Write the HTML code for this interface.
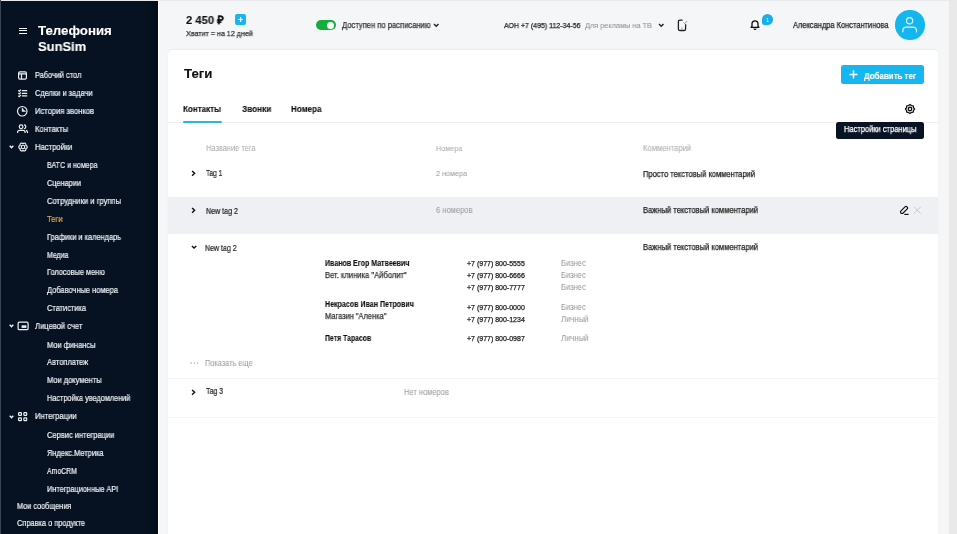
<!DOCTYPE html>
<html><head><meta charset="utf-8"><style>
html,body{margin:0;padding:0;width:957px;height:534px;overflow:hidden;background:#f5f6f8;}
body{position:relative;font-family:"Liberation Sans", sans-serif;}
.t{position:absolute;white-space:nowrap;line-height:1;transform-origin:0 50%;will-change:transform;}
.r{position:absolute;}
</style></head><body>
<div class="r" style="left:0px;top:0px;width:957px;height:534px;background:#f5f6f8;"></div>
<div class="r" style="left:0px;top:0px;width:957px;height:1px;background:#e8e9eb;"></div>
<div class="r" style="left:0px;top:1px;width:158px;height:533px;background:#061222;"></div>
<div class="r" style="left:144px;top:1px;width:14px;height:533px;background:linear-gradient(90deg,#061222,#030d1b);"></div>
<div class="r" style="left:0px;top:0px;width:1px;height:534px;background:#3b4553;"></div>
<div class="r" style="left:158px;top:0px;width:1px;height:534px;background:#ffffff;"></div>
<div class="r" style="left:949px;top:0px;width:8px;height:534px;background:#e9e9e9;"></div>
<div class="r" style="left:168px;top:49.8px;width:770px;height:490px;background:#ffffff;border-radius:4px;box-shadow:0 -0.5px 1.5px rgba(0,0,0,0.05);"></div>
<div class="r" style="left:19px;top:27.5px;width:8.3px;height:1.3px;background:#eef1f5;"></div>
<div class="r" style="left:19px;top:30px;width:8.3px;height:1.3px;background:#eef1f5;"></div>
<div class="r" style="left:19px;top:32.5px;width:8.3px;height:1.3px;background:#eef1f5;"></div>
<div class="t" style="left:37.5px;top:24px;font-size:13.25px;font-weight:700;color:#ffffff;-webkit-text-stroke:0.12px #ffffff;">Телефония</div>
<div class="t" style="left:37.5px;top:40px;font-size:13.25px;font-weight:700;color:#ffffff;transform:scaleX(0.979);-webkit-text-stroke:0.12px #ffffff;">SunSim</div>
<div class="t" style="left:34.5px;top:72px;font-size:8.25px;font-weight:400;color:#eef1f5;transform:scaleX(0.894);-webkit-text-stroke:0.2px #eef1f5;">Рабочий стол</div>
<div class="t" style="left:34.5px;top:90px;font-size:8.25px;font-weight:400;color:#eef1f5;transform:scaleX(0.901);-webkit-text-stroke:0.2px #eef1f5;">Сделки и задачи</div>
<div class="t" style="left:34.5px;top:108px;font-size:8.25px;font-weight:400;color:#eef1f5;transform:scaleX(0.919);-webkit-text-stroke:0.2px #eef1f5;">История звонков</div>
<div class="t" style="left:34.5px;top:126px;font-size:8.25px;font-weight:400;color:#eef1f5;transform:scaleX(0.926);-webkit-text-stroke:0.2px #eef1f5;">Контакты</div>
<div class="t" style="left:34.5px;top:144px;font-size:8.25px;font-weight:400;color:#eef1f5;transform:scaleX(0.927);-webkit-text-stroke:0.2px #eef1f5;">Настройки</div>
<div class="t" style="left:46.5px;top:162px;font-size:8.25px;font-weight:400;color:#eef1f5;transform:scaleX(0.858);-webkit-text-stroke:0.2px #eef1f5;">ВАТС и номера</div>
<div class="t" style="left:46.5px;top:180px;font-size:8.25px;font-weight:400;color:#eef1f5;transform:scaleX(0.891);-webkit-text-stroke:0.2px #eef1f5;">Сценарии</div>
<div class="t" style="left:46.5px;top:198px;font-size:8.25px;font-weight:400;color:#eef1f5;transform:scaleX(0.921);-webkit-text-stroke:0.2px #eef1f5;">Сотрудники и группы</div>
<div class="t" style="left:46.5px;top:216px;font-size:8.25px;font-weight:400;color:#e0a558;transform:scaleX(0.923);-webkit-text-stroke:0.2px #e0a558;">Теги</div>
<div class="t" style="left:46.5px;top:234px;font-size:8.25px;font-weight:400;color:#eef1f5;transform:scaleX(0.896);-webkit-text-stroke:0.2px #eef1f5;">Графики и календарь</div>
<div class="t" style="left:46.5px;top:252px;font-size:8.25px;font-weight:400;color:#eef1f5;transform:scaleX(0.847);-webkit-text-stroke:0.2px #eef1f5;">Медиа</div>
<div class="t" style="left:46.5px;top:269px;font-size:8.25px;font-weight:400;color:#eef1f5;transform:scaleX(0.890);-webkit-text-stroke:0.2px #eef1f5;">Голосовые меню</div>
<div class="t" style="left:46.5px;top:287px;font-size:8.25px;font-weight:400;color:#eef1f5;transform:scaleX(0.906);-webkit-text-stroke:0.2px #eef1f5;">Добавочные номера</div>
<div class="t" style="left:46.5px;top:305px;font-size:8.25px;font-weight:400;color:#eef1f5;transform:scaleX(0.900);-webkit-text-stroke:0.2px #eef1f5;">Статистика</div>
<div class="t" style="left:34.5px;top:323px;font-size:8.25px;font-weight:400;color:#eef1f5;transform:scaleX(0.921);-webkit-text-stroke:0.2px #eef1f5;">Лицевой счет</div>
<div class="t" style="left:46.5px;top:342px;font-size:8.25px;font-weight:400;color:#eef1f5;transform:scaleX(0.903);-webkit-text-stroke:0.2px #eef1f5;">Мои финансы</div>
<div class="t" style="left:46.5px;top:359px;font-size:8.25px;font-weight:400;color:#eef1f5;transform:scaleX(0.908);-webkit-text-stroke:0.2px #eef1f5;">Автоплатеж</div>
<div class="t" style="left:46.5px;top:377px;font-size:8.25px;font-weight:400;color:#eef1f5;transform:scaleX(0.908);-webkit-text-stroke:0.2px #eef1f5;">Мои документы</div>
<div class="t" style="left:46.5px;top:395px;font-size:8.25px;font-weight:400;color:#eef1f5;transform:scaleX(0.887);-webkit-text-stroke:0.2px #eef1f5;">Настройка уведомлений</div>
<div class="t" style="left:34.5px;top:413px;font-size:8.25px;font-weight:400;color:#eef1f5;transform:scaleX(0.927);-webkit-text-stroke:0.2px #eef1f5;">Интеграции</div>
<div class="t" style="left:46.5px;top:432px;font-size:8.25px;font-weight:400;color:#eef1f5;transform:scaleX(0.908);-webkit-text-stroke:0.2px #eef1f5;">Сервис интеграции</div>
<div class="t" style="left:46.5px;top:450px;font-size:8.25px;font-weight:400;color:#eef1f5;transform:scaleX(0.903);-webkit-text-stroke:0.2px #eef1f5;">Яндекс.Метрика</div>
<div class="t" style="left:46.5px;top:468px;font-size:8.25px;font-weight:400;color:#eef1f5;transform:scaleX(0.833);-webkit-text-stroke:0.2px #eef1f5;">AmoCRM</div>
<div class="t" style="left:46.5px;top:486px;font-size:8.25px;font-weight:400;color:#eef1f5;transform:scaleX(0.890);-webkit-text-stroke:0.2px #eef1f5;">Интеграционные API</div>
<div class="t" style="left:17px;top:503px;font-size:8.25px;font-weight:400;color:#eef1f5;transform:scaleX(0.883);-webkit-text-stroke:0.2px #eef1f5;">Мои сообщения</div>
<div class="t" style="left:17px;top:520px;font-size:8.25px;font-weight:400;color:#eef1f5;transform:scaleX(0.896);-webkit-text-stroke:0.2px #eef1f5;">Справка о продукте</div>
<svg class="r" style="left:17px;top:70px" width="11" height="11" viewBox="0 0 11 11"><rect x="1.6" y="1.9" width="7.8" height="7.2" rx="1.3" fill="none" stroke="#eef1f5" stroke-width="1.2"/><path d="M1.7 3.8H9.3M4.5 3.8V9" fill="none" stroke="#eef1f5" stroke-width="1.2"/></svg>
<svg class="r" style="left:17px;top:89px" width="11" height="9" viewBox="0 0 11 9"><path d="M4.9 1.6H10.2M4.9 4.3H10.2M4.9 6.9H10.2" fill="none" stroke="#eef1f5" stroke-width="1.2" stroke-width="1.3"/><path d="M1.3 1.4l1 0.9 1.6-1.7M1.3 4.1l1 0.9 1.6-1.7M1.3 6.7l1 0.9 1.6-1.7" fill="none" stroke="#eef1f5" stroke-width="1.2" stroke-width="1"/></svg>
<svg class="r" style="left:16.1px;top:104.9px" width="12.5" height="12.5" viewBox="0 0 12.5 12.5"><circle cx="6.25" cy="6.25" r="4.75" fill="none" stroke="#eef1f5" stroke-width="1.2" stroke-width="1.25"/><path d="M6.1 2.7V6.45H9.7Q7.3 5.5 6.1 2.7Z" fill="#eef1f5" stroke="#eef1f5" stroke-width="0.5" stroke-linejoin="round"/></svg>
<svg class="r" style="left:16px;top:123px" width="13" height="11" viewBox="0 0 13 11"><circle cx="5.1" cy="3.75" r="1.85" fill="none" stroke="#eef1f5" stroke-width="1.2" stroke-width="1.25"/><path d="M8 1.9a1.85 1.85 0 0 1 0 3.7" fill="none" stroke="#eef1f5" stroke-width="1.2" stroke-width="1.25"/><path d="M1.6 9.9V9.2a1.9 1.9 0 0 1 1.9-1.9h3.7a1.9 1.9 0 0 1 1.9 1.9v0.7" fill="none" stroke="#eef1f5" stroke-width="1.2" stroke-width="1.25"/><path d="M9.9 7.35a1.9 1.9 0 0 1 1.6 1.85v0.7" fill="none" stroke="#eef1f5" stroke-width="1.2" stroke-width="1.25"/></svg>
<svg class="r" style="left:16.6px;top:140.9px" width="12" height="12" viewBox="0 0 12 12"><path d="M8.86 4.35 A1.68 1.68 0 0 0 6.00 2.70 A1.68 1.68 0 0 0 3.14 4.35 A1.68 1.68 0 0 0 3.14 7.65 A1.68 1.68 0 0 0 6.00 9.30 A1.68 1.68 0 0 0 8.86 7.65 A1.68 1.68 0 0 0 8.86 4.35Z" fill="none" stroke="#eef1f5" stroke-width="1.2" stroke-width="1.25"/><circle cx="6" cy="6" r="1.75" fill="none" stroke="#eef1f5" stroke-width="1.2" stroke-width="1.2"/></svg>
<svg class="r" style="left:16.5px;top:321.2px" width="12.5" height="10" viewBox="0 0 12.5 10"><rect x="1.1" y="1.1" width="10" height="7.6" rx="1.3" fill="none" stroke="#eef1f5" stroke-width="1.2" stroke-width="1.35"/><rect x="4.6" y="4.3" width="4.8" height="2.6" fill="#eef1f5"/></svg>
<svg class="r" style="left:17.9px;top:411.8px" width="10" height="10" viewBox="0 0 10 10"><rect x="0.6" y="0.6" width="2.8" height="2.8" rx="0.6" fill="none" stroke="#eef1f5" stroke-width="1.2" stroke-width="1.15"/><rect x="0.6" y="5.8999999999999995" width="2.8" height="2.8" rx="0.6" fill="none" stroke="#eef1f5" stroke-width="1.2" stroke-width="1.15"/><rect x="5.8999999999999995" y="0.6" width="2.8" height="2.8" rx="0.6" fill="none" stroke="#eef1f5" stroke-width="1.2" stroke-width="1.15"/><rect x="5.8999999999999995" y="5.8999999999999995" width="2.8" height="2.8" rx="0.6" fill="none" stroke="#eef1f5" stroke-width="1.2" stroke-width="1.15"/></svg>
<svg class="r" style="left:8.5px;top:144.5px" width="5" height="4" viewBox="0 0 5 4"><path d="M0.7 0.8L2.5 2.8L4.3 0.8" fill="none" stroke="#eef1f5" stroke-width="1.3"/></svg>
<svg class="r" style="left:8.5px;top:324px" width="5" height="4" viewBox="0 0 5 4"><path d="M0.7 0.8L2.5 2.8L4.3 0.8" fill="none" stroke="#eef1f5" stroke-width="1.3"/></svg>
<svg class="r" style="left:8.5px;top:414.5px" width="5" height="4" viewBox="0 0 5 4"><path d="M0.7 0.8L2.5 2.8L4.3 0.8" fill="none" stroke="#eef1f5" stroke-width="1.3"/></svg>
<div class="t" style="left:185.8px;top:15px;font-size:11.50px;font-weight:700;color:#111;transform:scaleX(0.975);-webkit-text-stroke:0.12px #111;">2 450 ₽</div>
<div class="r" style="left:235.2px;top:13.8px;width:11.2px;height:11px;background:#1ab5ee;border-radius:2px;"></div>
<svg class="r" style="left:235.2px;top:13.8px" width="11.2" height="11" viewBox="0 0 11.2 11"><path d="M5.6 3.1V7.9M3.2 5.5H8" stroke="#fff" stroke-width="1.15"/></svg>
<div class="t" style="left:185.8px;top:30px;font-size:7.75px;font-weight:400;color:#333;transform:scaleX(0.921);-webkit-text-stroke:0.25px #333;">Хватит = на 12 дней</div>
<div class="r" style="left:316px;top:19.9px;width:19.9px;height:9.9px;background:#13ad3b;border-radius:5px;"></div>
<div class="r" style="left:326.9px;top:21.5px;width:7.3px;height:7.3px;background:#ffffff;border-radius:50%;"></div>
<div class="t" style="left:341.6px;top:22px;font-size:8.25px;font-weight:400;color:#333;transform:scaleX(0.921);-webkit-text-stroke:0.25px #333;">Доступен по расписанию</div>
<svg class="r" style="left:433px;top:23px" width="6.5" height="4.5" viewBox="0 0 6.5 4.5"><path d="M1 0.9L3.25 3.2L5.5 0.9" fill="none" stroke="#222" stroke-width="1.4"/></svg>
<div class="t" style="left:503.8px;top:22px;font-size:7.75px;font-weight:400;color:#222;transform:scaleX(0.902);-webkit-text-stroke:0.25px #222;">АОН +7 (495) 112-34-56</div>
<div class="t" style="left:584.9px;top:22px;font-size:8.00px;font-weight:400;color:#8f8f8f;transform:scaleX(0.915);-webkit-text-stroke:0.05px #8f8f8f;">Для рекламы на ТВ</div>
<svg class="r" style="left:657.5px;top:23px" width="6.5" height="4.5" viewBox="0 0 6.5 4.5"><path d="M1 0.9L3.25 3.2L5.5 0.9" fill="none" stroke="#222" stroke-width="1.4"/></svg>
<svg class="r" style="left:677px;top:19px" width="12" height="12.5" viewBox="0 0 12 12.5"><path d="M5.6 1.1H3a1.6 1.6 0 0 0-1.6 1.6V9.9a1.6 1.6 0 0 0 1.6 1.6H7a1.6 1.6 0 0 0 1.6-1.6V5.2" fill="none" stroke="#222" stroke-width="1.3"/><path d="M4.2 9.2H5.8" stroke="#999" stroke-width="0.9"/><path d="M6.6 3.7l1.1 1 2.6-2.7" fill="none" stroke="#5fbf6a" stroke-width="1"/></svg>
<svg class="r" style="left:750px;top:19.3px" width="10" height="10.5" viewBox="0 0 10 10.5"><path d="M2 7.3V4.8a3 3 0 0 1 6 0V7.3L8.9 8.3H1.1Z" fill="none" stroke="#111" stroke-width="1.3" stroke-linejoin="round"/><path d="M4 9.5a1 1 0 0 0 2 0" fill="none" stroke="#111" stroke-width="1.1"/></svg>
<div class="r" style="left:761.5px;top:13.8px;width:11.5px;height:11.2px;background:#17afe9;border-radius:50% 50% 50% 20%;"></div>
<div class="t" style="left:766px;top:17px;font-size:6.00px;font-weight:400;color:#d8f2fc;">1</div>
<div class="t" style="left:793.3px;top:22px;font-size:8.25px;font-weight:400;color:#222;transform:scaleX(0.905);-webkit-text-stroke:0.25px #222;">Александра Константинова</div>
<div class="r" style="left:895.2px;top:10.2px;width:29.5px;height:29.5px;background:#14b6f0;border-radius:50%;"></div>
<svg class="r" style="left:895px;top:10px" width="30" height="30" viewBox="0 0 30 30"><circle cx="14.6" cy="10.7" r="3.1" fill="none" stroke="#e8f8fe" stroke-width="1.2"/><path d="M7.9 21.8V20.6a3.5 3.5 0 0 1 3.5-3.5h6.6a3.5 3.5 0 0 1 3.5 3.5V21.8" fill="none" stroke="#e8f8fe" stroke-width="1.2" stroke-linecap="round"/></svg>
<div class="t" style="left:183.6px;top:67px;font-size:13.00px;font-weight:700;color:#111;transform:scaleX(1.020);-webkit-text-stroke:0.12px #111;">Теги</div>
<div class="r" style="left:840.8px;top:65.1px;width:83.7px;height:19.1px;background:#16b7f0;border-radius:2.5px;"></div>
<svg class="r" style="left:849px;top:69.8px" width="9" height="9" viewBox="0 0 9 9"><path d="M4.5 0.5V8.5M0.5 4.5H8.5" stroke="#fff" stroke-width="1.5"/></svg>
<div class="t" style="left:863.7px;top:72px;font-size:9.00px;font-weight:700;color:#fff;transform:scaleX(0.881);-webkit-text-stroke:0.12px #fff;">Добавить тег</div>
<div class="t" style="left:183.4px;top:105px;font-size:9.00px;font-weight:700;color:#111;transform:scaleX(0.895);-webkit-text-stroke:0.12px #111;">Контакты</div>
<div class="t" style="left:241.9px;top:105px;font-size:9.00px;font-weight:700;color:#111;transform:scaleX(0.915);-webkit-text-stroke:0.12px #111;">Звонки</div>
<div class="t" style="left:291.2px;top:105px;font-size:9.00px;font-weight:700;color:#111;transform:scaleX(0.896);-webkit-text-stroke:0.12px #111;">Номера</div>
<div class="r" style="left:168px;top:121.8px;width:770px;height:1px;background:#efefef;"></div>
<div class="r" style="left:183.4px;top:121px;width:38.9px;height:2px;background:#2bb7e6;border-radius:1px;"></div>
<svg class="r" style="left:904.1px;top:103.2px" width="12" height="12" viewBox="0 0 12 12"><path d="M6.00 1.45 L4.56 2.54 L2.78 2.78 L2.54 4.56 L1.45 6.00 L2.54 7.44 L2.78 9.22 L4.56 9.46 L6.00 10.55 L7.44 9.46 L9.22 9.22 L9.46 7.44 L10.55 6.00 L9.46 4.56 L9.22 2.78 L7.44 2.54Z" fill="none" stroke="#111" stroke-width="1.3" stroke-linejoin="round"/><circle cx="6" cy="6" r="1.75" fill="none" stroke="#111" stroke-width="1.3"/></svg>
<div class="r" style="left:835.9px;top:122px;width:88px;height:16.9px;background:#081323;border-radius:2.5px;"></div>
<div class="t" style="left:843.5px;top:126px;font-size:8.25px;font-weight:400;color:#fff;transform:scaleX(0.909);-webkit-text-stroke:0.25px #fff;">Настройки страницы</div>
<div class="t" style="left:205.7px;top:145px;font-size:8.25px;font-weight:400;color:#acacac;transform:scaleX(0.902);-webkit-text-stroke:0.05px #acacac;">Название тега</div>
<div class="t" style="left:435.8px;top:145px;font-size:8.00px;font-weight:400;color:#acacac;transform:scaleX(0.904);-webkit-text-stroke:0.05px #acacac;">Номера</div>
<div class="t" style="left:642.7px;top:145px;font-size:8.25px;font-weight:400;color:#acacac;transform:scaleX(0.927);-webkit-text-stroke:0.05px #acacac;">Комментарий</div>
<svg class="r" style="left:190.8px;top:170.0px" width="5" height="7" viewBox="0 0 5 7"><path d="M1.1 0.9L3.6 3.35L1.1 5.8" fill="none" stroke="#111" stroke-width="1.45"/></svg>
<div class="t" style="left:206.3px;top:170px;font-size:8.25px;font-weight:400;color:#222;transform:scaleX(0.807);-webkit-text-stroke:0.22px #222;">Tag 1</div>
<div class="t" style="left:435.8px;top:170px;font-size:8.00px;font-weight:400;color:#9c9c9c;transform:scaleX(0.901);-webkit-text-stroke:0.05px #9c9c9c;">2 номера</div>
<div class="t" style="left:642.7px;top:171px;font-size:8.25px;font-weight:400;color:#222;transform:scaleX(0.916);-webkit-text-stroke:0.25px #222;">Просто текстовый комментарий</div>
<div class="r" style="left:168px;top:196.9px;width:770px;height:37.2px;background:#eff0f3;"></div>
<svg class="r" style="left:190.8px;top:207.0px" width="5" height="7" viewBox="0 0 5 7"><path d="M1.1 0.9L3.6 3.35L1.1 5.8" fill="none" stroke="#111" stroke-width="1.45"/></svg>
<div class="t" style="left:206px;top:208px;font-size:8.25px;font-weight:400;color:#222;transform:scaleX(0.861);-webkit-text-stroke:0.2px #222;">New tag 2</div>
<div class="t" style="left:435.5px;top:207px;font-size:8.25px;font-weight:400;color:#9c9c9c;transform:scaleX(0.916);-webkit-text-stroke:0.05px #9c9c9c;">6 номеров</div>
<div class="t" style="left:642.9px;top:207px;font-size:8.25px;font-weight:400;color:#222;transform:scaleX(0.917);-webkit-text-stroke:0.25px #222;">Важный текстовый комментарий</div>
<svg class="r" style="left:899px;top:205.2px" width="11" height="10.5" viewBox="0 0 11 10.5"><path d="M2 8.3L1.5 6.4L6.2 1.7a1 1 0 0 1 1.5 0l0.6 0.6a1 1 0 0 1 0 1.5L3.6 8.5Z" fill="none" stroke="#111" stroke-width="1.2" stroke-linejoin="round"/><path d="M5.3 9.4H9.6" stroke="#111" stroke-width="1.2"/></svg>
<svg class="r" style="left:913.1px;top:205.8px" width="8.5" height="8.5" viewBox="0 0 8.5 8.5"><path d="M0.8 0.8L7.7 7.7M7.7 0.8L0.8 7.7" stroke="#c8c8c8" stroke-width="1"/></svg>
<svg class="r" style="left:190.7px;top:245.10000000000002px" width="6" height="4.5" viewBox="0 0 6 4.5"><path d="M0.9 0.9L3.1 3.1L5.3 0.9" fill="none" stroke="#111" stroke-width="1.4"/></svg>
<div class="t" style="left:205.3px;top:245px;font-size:8.25px;font-weight:400;color:#222;transform:scaleX(0.853);-webkit-text-stroke:0.2px #222;">New tag 2</div>
<div class="t" style="left:642.8px;top:244px;font-size:8.25px;font-weight:400;color:#222;transform:scaleX(0.917);-webkit-text-stroke:0.25px #222;">Важный текстовый комментарий</div>
<div class="t" style="left:325px;top:259px;font-size:8.50px;font-weight:700;color:#111;transform:scaleX(0.830);-webkit-text-stroke:0.12px #111;">Иванов Егор Матвеевич</div>
<div class="t" style="left:325px;top:272px;font-size:8.25px;font-weight:400;color:#333;transform:scaleX(0.923);-webkit-text-stroke:0.25px #333;">Вет. клиника "Айболит"</div>
<div class="t" style="left:466.6px;top:260px;font-size:7.00px;font-weight:400;color:#222;-webkit-text-stroke:0.25px #222;">+7 (977) 800-5555</div>
<div class="t" style="left:560.8px;top:260px;font-size:8.25px;font-weight:400;color:#9c9c9c;transform:scaleX(0.912);-webkit-text-stroke:0.05px #9c9c9c;">Бизнес</div>
<div class="t" style="left:466.6px;top:272px;font-size:7.00px;font-weight:400;color:#222;-webkit-text-stroke:0.25px #222;">+7 (977) 800-6666</div>
<div class="t" style="left:560.8px;top:272px;font-size:8.25px;font-weight:400;color:#9c9c9c;transform:scaleX(0.912);-webkit-text-stroke:0.05px #9c9c9c;">Бизнес</div>
<div class="t" style="left:466.6px;top:284px;font-size:7.00px;font-weight:400;color:#222;-webkit-text-stroke:0.25px #222;">+7 (977) 800-7777</div>
<div class="t" style="left:560.8px;top:284px;font-size:8.25px;font-weight:400;color:#9c9c9c;transform:scaleX(0.912);-webkit-text-stroke:0.05px #9c9c9c;">Бизнес</div>
<div class="t" style="left:466.6px;top:304px;font-size:7.00px;font-weight:400;color:#222;-webkit-text-stroke:0.25px #222;">+7 (977) 800-0000</div>
<div class="t" style="left:560.8px;top:304px;font-size:8.25px;font-weight:400;color:#9c9c9c;transform:scaleX(0.912);-webkit-text-stroke:0.05px #9c9c9c;">Бизнес</div>
<div class="t" style="left:466.6px;top:316px;font-size:7.00px;font-weight:400;color:#222;-webkit-text-stroke:0.25px #222;">+7 (977) 800-1234</div>
<div class="t" style="left:560.8px;top:316px;font-size:8.25px;font-weight:400;color:#9c9c9c;transform:scaleX(0.935);-webkit-text-stroke:0.05px #9c9c9c;">Личный</div>
<div class="t" style="left:466.6px;top:335px;font-size:7.00px;font-weight:400;color:#222;-webkit-text-stroke:0.25px #222;">+7 (977) 800-0987</div>
<div class="t" style="left:560.8px;top:335px;font-size:8.25px;font-weight:400;color:#9c9c9c;transform:scaleX(0.935);-webkit-text-stroke:0.05px #9c9c9c;">Личный</div>
<div class="t" style="left:325px;top:300px;font-size:8.50px;font-weight:700;color:#111;transform:scaleX(0.833);-webkit-text-stroke:0.12px #111;">Некрасов Иван Петрович</div>
<div class="t" style="left:325px;top:313px;font-size:8.25px;font-weight:400;color:#333;transform:scaleX(0.905);-webkit-text-stroke:0.25px #333;">Магазин "Аленка"</div>
<div class="t" style="left:325px;top:334px;font-size:8.50px;font-weight:700;color:#111;transform:scaleX(0.811);-webkit-text-stroke:0.12px #111;">Петя Тарасов</div>
<svg class="r" style="left:189.5px;top:360.9px" width="9" height="4" viewBox="0 0 9 4"><circle cx="1.2" cy="2" r="0.85" fill="#b8b8b8"/><circle cx="4.4" cy="2" r="0.85" fill="#b8b8b8"/><circle cx="7.6" cy="2" r="0.85" fill="#b8b8b8"/></svg>
<div class="t" style="left:204.8px;top:360px;font-size:8.25px;font-weight:400;color:#9c9c9c;transform:scaleX(0.894);-webkit-text-stroke:0.05px #9c9c9c;">Показать еще</div>
<div class="r" style="left:168px;top:377.6px;width:770px;height:1px;background:#f5f5f5;"></div>
<svg class="r" style="left:190.8px;top:388.79999999999995px" width="5" height="7" viewBox="0 0 5 7"><path d="M1.1 0.9L3.6 3.35L1.1 5.8" fill="none" stroke="#111" stroke-width="1.45"/></svg>
<div class="t" style="left:205.8px;top:388px;font-size:8.25px;font-weight:400;color:#222;transform:scaleX(0.852);-webkit-text-stroke:0.22px #222;">Tag 3</div>
<div class="t" style="left:403.9px;top:389px;font-size:8.25px;font-weight:400;color:#9c9c9c;transform:scaleX(0.908);-webkit-text-stroke:0.05px #9c9c9c;">Нет номеров</div>
<div class="r" style="left:168px;top:417.4px;width:770px;height:1px;background:#f5f5f5;"></div>
</body></html>
